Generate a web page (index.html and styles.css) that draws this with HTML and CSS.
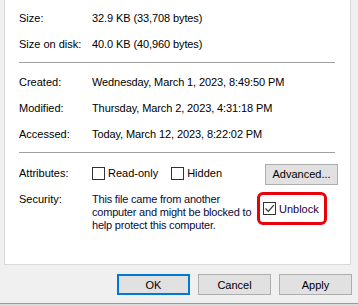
FILE: index.html
```
<!DOCTYPE html>
<html>
<head>
<meta charset="utf-8">
<link rel="stylesheet" href="styles.css">
</head>
<body>
<div class="panel">
  <div class="grid g1">
    <div class="lbl">Size:</div><div class="val">32.9 KB (33,708 bytes)</div>
    <div class="lbl">Size on disk:</div><div class="val">40.0 KB (40,960 bytes)</div>
  </div>
  <div class="sep"></div>
  <div class="grid g2">
    <div class="lbl">Created:</div><div class="val">Wednesday, March 1, 2023, 8:49:50 PM</div>
    <div class="lbl">Modified:</div><div class="val">Thursday, March 2, 2023, 4:31:18 PM</div>
    <div class="lbl">Accessed:</div><div class="val">Today, March 12, 2023, 8:22:02 PM</div>
  </div>
  <div class="sep"></div>
  <div class="attr">
    <div class="lbl">Attributes:</div>
    <label class="chk"><span class="box"></span>Read-only</label>
    <label class="chk hid"><span class="box"></span>Hidden</label>
    <button class="btn adv">Advanced...</button>
  </div>
  <div class="sec">
    <div class="lbl">Security:</div>
    <div class="sectext">This file came from another<br>computer and might be blocked to<br>help protect this computer.</div>
    <div class="hl">
      <label class="chk unb"><span class="box checked"><svg width="11" height="11" viewBox="0 0 11 11"><path d="M1.5 5.5 L4.3 8.3 L9.8 2.2" fill="none" stroke="#333" stroke-width="1.2"/></svg></span>Unblock</label>
    </div>
  </div>
</div>
<div class="buttons">
  <button class="btn ok">OK</button>
  <button class="btn">Cancel</button>
  <button class="btn">Apply</button>
</div>
<div class="frame"></div>
</body>
</html>
```
FILE: styles.css
```
html, body {
  margin: 0;
  padding: 0;
}
body {
  width: 358px;
  height: 306px;
  background: #f0f0f0;
  font-family: "Liberation Sans", Arial, sans-serif;
  font-size: 11px;
  color: #000;
  overflow: hidden;
  position: relative;
}
.panel {
  margin-left: 4px;
  background: #fff;
  border: 1px solid #d9d9d9;
  border-top: none;
  padding: 5px 0 0 14px;
  box-sizing: border-box;
  width: 347px;
  height: 265px;
}
.grid {
  display: grid;
  grid-template-columns: 73px 1fr;
  grid-auto-rows: 26px;
  align-items: center;
}
.val {
  letter-spacing: -0.1px;
}
.sep {
  width: 316px;
  height: 1px;
  background: #a0a0a0;
  margin: 5px 0 6px 0;
}
.attr {
  display: flex;
  align-items: center;
  height: 26px;
  margin-top: 7px;
}
.attr .lbl {
  width: 73px;
}
.chk {
  display: flex;
  align-items: center;
  white-space: nowrap;
}
.box {
  width: 13px;
  height: 13px;
  box-sizing: border-box;
  border: 1px solid #333;
  background: #fff;
  margin-right: 3px;
  display: flex;
  align-items: center;
  justify-content: center;
}
.hid {
  margin-left: 13px;
}
.btn {
  font-family: "Liberation Sans", Arial, sans-serif;
  font-size: 11px;
  color: #000;
  width: 73px;
  height: 21px;
  background: #e1e1e1;
  border: 1px solid #adadad;
  padding: 0;
  margin: 0;
  box-sizing: border-box;
}
.adv {
  margin-left: auto;
  margin-right: 12px;
  margin-top: 2px;
}
.sec {
  display: flex;
  align-items: flex-start;
  margin-top: 6px;
}
.sec .lbl {
  width: 73px;
  flex: none;
  line-height: 13px;
  padding-top: 1px;
}
.sectext {
  width: 165px;
  flex: none;
  white-space: nowrap;
  line-height: 13px;
  padding-top: 1px;
  letter-spacing: -0.2px;
  color: #0a0a3a;
}
.hl {
  width: 70px;
  height: 33px;
  flex: none;
  box-sizing: border-box;
  border: 3px solid #e8000b;
  border-radius: 6px;
  padding-left: 3px;
  display: flex;
  align-items: center;
}
.unb {
  color: #200040;
}
.buttons {
  display: flex;
  justify-content: flex-end;
  gap: 8px;
  padding-right: 6px;
  margin-top: 9px;
}
.ok {
  border: 2px solid #0078d7;
}
.frame {
  position: absolute;
  left: 0;
  right: 0;
  top: 303px;
  height: 3px;
  border-top: 1px solid #9a9a9a;
  background: #dadada;
  box-sizing: border-box;
}
```
